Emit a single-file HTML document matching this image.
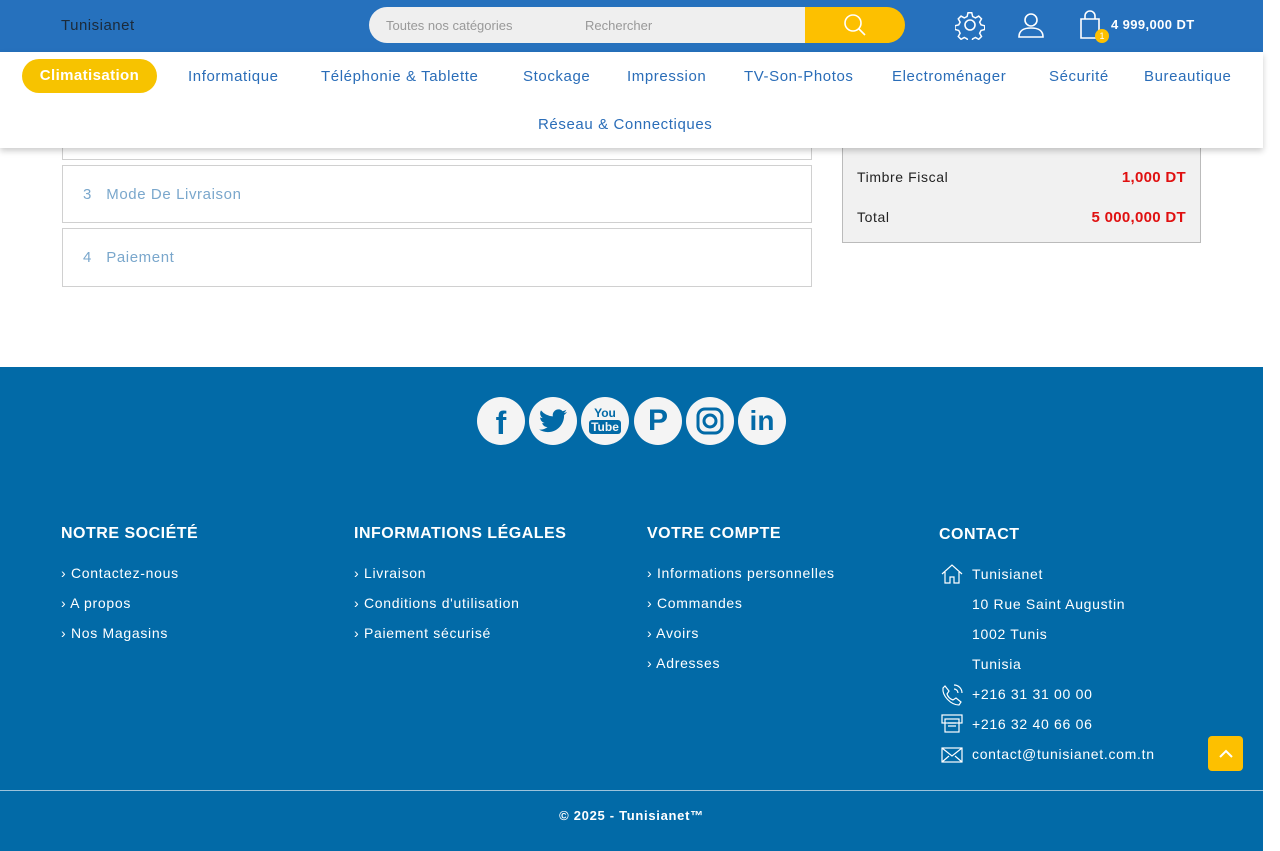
<!DOCTYPE html>
<html><head><meta charset="utf-8"><style>
*{margin:0;padding:0;box-sizing:border-box}
body{width:1280px;height:851px;overflow:hidden;background:#fff;font-family:"Liberation Sans",sans-serif;position:relative}
.a{position:absolute}
.hdr{left:0;top:0;width:1263px;height:52px;background:#2671bd}
.nav{left:0;top:52px;width:1263px;height:96px;background:#fff;box-shadow:0 3px 6px rgba(0,0,0,.2)}
.nav span{position:absolute;color:#2a6db8;font-size:15px;top:16px;letter-spacing:.6px}
.box{border:1px solid #d0d0d0;background:#fff}
.step{color:#7aa7cc;font-size:15px;letter-spacing:.6px}
.foot{left:0;top:367px;width:1263px;height:484px;background:#026aa7;color:#fff}
.ft h4{position:absolute;font-size:16px;top:158px;letter-spacing:.5px}
.ft p{position:absolute;font-size:14px;letter-spacing:.7px}
.soc{position:absolute;top:30px;width:48px;height:48px;border-radius:50%;background:#f4f4f4;color:#026aa7;font-weight:bold;text-align:center;line-height:48px;font-size:26px}
</style></head><body>
<div class="a hdr">
 <div class="a" style="left:61px;top:17px;font-size:15px;color:#1b2a3a;letter-spacing:.5px">Tunisianet</div>
 <div class="a" style="left:369px;top:7px;width:436px;height:36px;background:#efefef;border-radius:18px 0 0 18px"></div>
 <div class="a" style="left:386px;top:18px;font-size:13px;color:#999">Toutes nos catégories</div>
 <div class="a" style="left:585px;top:18px;font-size:13px;color:#999">Rechercher</div>
 <div class="a" style="left:805px;top:7px;width:100px;height:36px;background:#fdc000;border-radius:0 18px 18px 0"></div>
 <svg class="a" style="left:843px;top:13px" width="24" height="24" fill="none" stroke="#fff" stroke-width="1.6"><circle cx="10" cy="10" r="8"/><path d="M16 16l6 6"/></svg>
 <svg class="a" style="left:955px;top:10px" width="30" height="30" fill="none" stroke="#fff" stroke-width="1.6"><circle cx="15" cy="15" r="5"/><path d="M13 2h4l1 4 3 1.5 3.5-2 3 3-2 3.5 1.5 3 4 1v4l-4 1-1.5 3 2 3.5-3 3-3.5-2-3 1.5-1 4h-4l-1-4-3-1.5-3.5 2-3-3 2-3.5-1.5-3-4-1v-4l4-1 1.5-3-2-3.5 3-3 3.5 2 3-1.5z" transform="scale(.93) translate(1 1)"/></svg>
 <svg class="a" style="left:1017px;top:11px" width="28" height="28" fill="none" stroke="#fff" stroke-width="1.6"><circle cx="14" cy="9" r="6"/><path d="M2 26c0-7 5-9 12-9s12 2 12 9z"/></svg>
 <svg class="a" style="left:1079px;top:10px" width="26" height="30" fill="none" stroke="#fff" stroke-width="1.6"><path d="M2 9h18v19H2z"/><path d="M6 9V6a5 5 0 0 1 10 0v3"/></svg>
 <div class="a" style="left:1095px;top:29px;width:14px;height:14px;border-radius:50%;background:#fdc000;color:#fff;font-size:9px;text-align:center;line-height:14px">1</div>
 <div class="a" style="left:1111px;top:17px;font-size:13px;color:#fff;font-weight:bold;letter-spacing:.4px">4 999,000 DT</div>
</div>
<div class="a box" style="left:62px;top:130px;width:750px;height:30px"></div>
<div class="a box" style="left:62px;top:165px;width:750px;height:58px"><span class="a step" style="left:20px;top:20px">3 &nbsp;&nbsp;Mode De Livraison</span></div>
<div class="a box" style="left:62px;top:228px;width:750px;height:59px"><span class="a step" style="left:20px;top:20px">4 &nbsp;&nbsp;Paiement</span></div>
<div class="a" style="left:842px;top:130px;width:359px;height:113px;background:#f1f1f1;border:1px solid #bbb">
 <div class="a" style="left:14px;top:38px;font-size:14px;color:#222;letter-spacing:.6px">Timbre Fiscal</div>
 <div class="a" style="right:14px;top:38px;font-size:15px;color:#e01010;font-weight:bold;letter-spacing:.3px">1,000 DT</div>
 <div class="a" style="left:14px;top:78px;font-size:14px;color:#222;letter-spacing:.6px">Total</div>
 <div class="a" style="right:14px;top:78px;font-size:15px;color:#e01010;font-weight:bold;letter-spacing:.3px">5 000,000 DT</div>
</div>
<div class="a nav">
 <div class="a" style="left:22px;top:7px;width:135px;height:34px;border-radius:17px;background:#f7c300;color:#fff;font-weight:bold;font-size:15px;text-align:center;line-height:34px;letter-spacing:.4px">Climatisation</div>
 <span style="left:188px">Informatique</span><span style="left:321px">Téléphonie &amp; Tablette</span><span style="left:523px">Stockage</span><span style="left:627px">Impression</span><span style="left:744px">TV-Son-Photos</span><span style="left:892px">Electroménager</span><span style="left:1049px">Sécurité</span><span style="left:1144px">Bureautique</span><span style="left:538px;top:64px">Réseau &amp; Connectiques</span>
</div>
<div class="a foot ft">
 <div class="soc" style="left:477px;font-family:'Liberation Sans';font-size:32px;line-height:52px">f</div>
 <div class="soc" style="left:529px"><svg width="28" height="24" viewBox="0 0 24 20" style="margin-top:12px"><path fill="#026aa7" d="M24 2.3c-.9.4-1.8.7-2.8.8 1-.6 1.8-1.6 2.2-2.7-1 .6-2 1-3.1 1.2A4.9 4.9 0 0 0 11.9 6 14 14 0 0 1 1.7.9a4.9 4.9 0 0 0 1.5 6.6c-.8 0-1.6-.2-2.2-.6 0 2.4 1.7 4.4 3.9 4.8-.7.2-1.5.2-2.2.1.6 2 2.4 3.4 4.6 3.4A9.9 9.9 0 0 1 0 17.3 14 14 0 0 0 7.5 19.5c9 0 14-7.5 14-14v-.6c1-.7 1.8-1.6 2.5-2.6z"/></svg></div>
 <div class="soc" style="left:581px;font-size:12px;line-height:14px;padding-top:9px">You<br><span style="background:#026aa7;color:#f4f4f4;border-radius:3px;padding:0 2px">Tube</span></div>
 <div class="soc" style="left:634px;font-size:30px">P</div>
 <div class="soc" style="left:686px"><svg width="30" height="30" style="margin-top:9px" fill="none" stroke="#026aa7" stroke-width="3"><rect x="3" y="3" width="24" height="24" rx="7"/><circle cx="15" cy="15" r="6"/></svg></div>
 <div class="soc" style="left:738px;font-size:28px">in</div>
 <h4 style="left:61px">NOTRE SOCIÉTÉ</h4><h4 style="left:354px">INFORMATIONS LÉGALES</h4><h4 style="left:647px">VOTRE COMPTE</h4><h4 style="left:939px;top:159px">CONTACT</h4>
 <p style="left:61px;top:198px">› Contactez-nous</p><p style="left:61px;top:228px">› A propos</p><p style="left:61px;top:258px">› Nos Magasins</p>
 <p style="left:354px;top:198px">› Livraison</p><p style="left:354px;top:228px">› Conditions d'utilisation</p><p style="left:354px;top:258px">› Paiement sécurisé</p>
 <p style="left:647px;top:198px">› Informations personnelles</p><p style="left:647px;top:228px">› Commandes</p><p style="left:647px;top:258px">› Avoirs</p><p style="left:647px;top:288px">› Adresses</p>
 <svg class="a" style="left:941px;top:197px" width="22" height="20" fill="none" stroke="#fff" stroke-width="1.2"><path d="M1 10L11 1l10 9M4 8v11h5v-6h4v6h5V8"/></svg>
 <p style="left:972px;top:199px">Tunisianet</p><p style="left:972px;top:229px">10 Rue Saint Augustin</p><p style="left:972px;top:259px">1002 Tunis</p><p style="left:972px;top:289px">Tunisia</p>
 <svg class="a" style="left:941px;top:317px" width="22" height="22" fill="none" stroke="#fff" stroke-width="1.2"><path d="M4 2l4 5-2 3c1 3 3 5 6 6l3-2 5 4-2 3C10 21 1 12 2 4z M13 5a4 4 0 0 1 4 4M13 1a8 8 0 0 1 8 8"/></svg>
 <p style="left:972px;top:319px">+216 31 31 00 00</p>
 <svg class="a" style="left:941px;top:347px" width="22" height="20" fill="none" stroke="#fff" stroke-width="1.2"><rect x="1" y="1" width="20" height="8"/><rect x="4" y="5" width="14" height="13"/><path d="M7 9h8M7 12h8"/></svg>
 <p style="left:972px;top:349px">+216 32 40 66 06</p>
 <svg class="a" style="left:941px;top:380px" width="22" height="16" fill="none" stroke="#fff" stroke-width="1.2"><rect x="1" y="1" width="20" height="14"/><path d="M1 1l10 8 10-8M1 15l7-6M21 15l-7-6"/></svg>
 <p style="left:972px;top:379px">contact@tunisianet.com.tn</p>
 <div class="a" style="left:1208px;top:369px;width:35px;height:35px;background:#fdc000;border-radius:4px;text-align:center"><svg width="16" height="16" style="margin-top:10px" fill="none" stroke="#fff" stroke-width="2"><path d="M2 11l6-6 6 6"/></svg></div>
 <div class="a" style="left:0;top:423px;width:1263px;height:1px;background:#9cc3dc"></div>
 <p style="left:0;width:1263px;text-align:center;top:441px;font-weight:bold;font-size:13px">© 2025 - Tunisianet™</p>
</div>
</body></html>
